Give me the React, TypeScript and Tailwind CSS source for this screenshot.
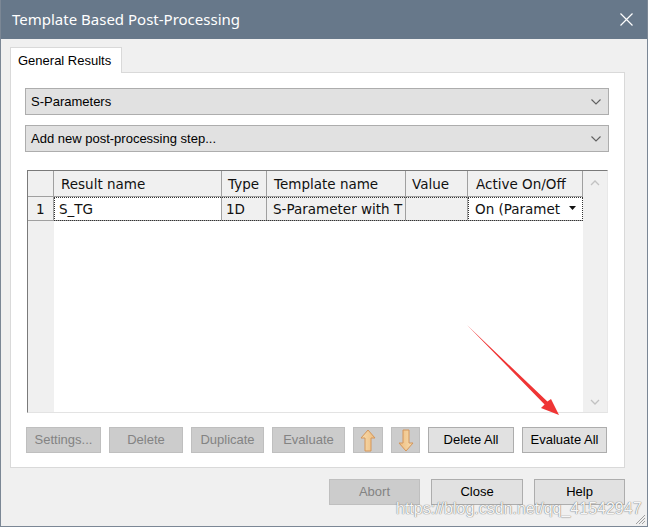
import React from "react";

const btnBase =
  "h-[26px] flex items-center justify-center border text-[13px] font-['Liberation_Sans',Arial,sans-serif]";
const enabled = "bg-[#e1e1e1] border-[#adadad] text-black";
const disabled = "bg-[#cccccc] border-[#bfbfbf] text-[#838383]";

function Chevron() {
  return (
    <svg width="12" height="8" viewBox="0 0 12 8">
      <path d="M1.5 1.5 L6 6 L10.5 1.5" fill="none" stroke="#606060" strokeWidth="1.1" />
    </svg>
  );
}

function Arrow({ down }: { down?: boolean }) {
  return (
    <svg width="16" height="23" viewBox="0 0 16 23" style={{ transform: down ? "rotate(180deg)" : undefined }}>
      <defs>
        <linearGradient id={down ? "gd" : "gu"} x1="0" y1="0" x2="1" y2="0">
          <stop offset="0" stopColor="#f7dcae" />
          <stop offset="1" stopColor="#eebd80" />
        </linearGradient>
      </defs>
      <path
        d="M8 1 L15 9 L11 9 L11 22 L5 22 L5 9 L1 9 Z"
        fill={`url(#${down ? "gd" : "gu"})`}
        stroke="#d4965a"
        strokeWidth="1"
        strokeLinejoin="round"
      />
    </svg>
  );
}

export default function App() {
  const tableFont = "font-['DejaVu_Sans',Verdana,sans-serif] text-[13.5px] text-[#111]";
  return (
    <div className="relative w-[648px] h-[527px] overflow-hidden bg-[#f0f0f0] border-x border-b border-[#7b8795] flex flex-col">
      {/* Title bar */}
      <div className="h-[39px] bg-[#67788a] flex items-center justify-between pl-[11px] pr-[14px] shrink-0">
        <span className="text-white text-[15px] font-['Noto_Sans',sans-serif]">Template Based Post-Processing</span>
        <svg width="13" height="13" viewBox="0 0 13 13">
          <path d="M0.5 0.5 L12.5 12.5 M12.5 0.5 L0.5 12.5" stroke="#ffffff" strokeWidth="1.2" />
        </svg>
      </div>

      {/* Body */}
      <div className="pl-[9px] pt-[8px] flex flex-col">
        <div className="w-[112px] h-[26px] bg-white border border-b-0 border-[#d9d9d9] relative z-10 -mb-px flex items-center pl-[7px] text-[13px] font-['Liberation_Sans',Arial,sans-serif] text-black">
          General Results
        </div>
        <div className="w-[615px] h-[396px] bg-white border border-[#d9d9d9] pl-[14px] pt-[15px] flex flex-col">
          {/* dropdowns */}
          <div className="w-[584px] h-[27px] bg-[#e1e1e1] border border-[#adadad] flex items-center justify-between pl-[5px] pr-[6px] text-[13px] font-['Liberation_Sans',Arial,sans-serif] text-black">
            <span>S-Parameters</span>
            <Chevron />
          </div>
          <div className="mt-[10px] w-[584px] h-[27px] bg-[#e1e1e1] border border-[#adadad] flex items-center justify-between pl-[5px] pr-[6px] text-[13px] font-['Liberation_Sans',Arial,sans-serif] text-black">
            <span>Add new post-processing step...</span>
            <Chevron />
          </div>

          {/* table */}
          <div className="mt-[18px] ml-[2px] w-[581px] h-[243px] border border-t-[#7a7a7a] border-l-[#7a7a7a] border-r-[#e8e8e8] border-b-[#e3e3e3] flex">
            <div className="w-[555px] flex flex-col">
              {/* header */}
              <div className={`h-[26px] flex bg-[#f0f0f0] ${tableFont}`}>
                <div className="w-[26px] border-r border-b border-[#a0a0a0]" />
                <div className="w-[168px] border-r border-b border-[#a0a0a0] flex items-center pl-[7px] pt-px">Result name</div>
                <div className="w-[45px] border-r border-b border-[#a0a0a0] flex items-center pl-[6px] pt-px">Type</div>
                <div className="w-[139px] border-r border-b border-[#a0a0a0] flex items-center pl-[7px] pt-px">Template name</div>
                <div className="w-[62px] border-r border-b border-[#a0a0a0] flex items-center pl-[6px] pt-px">Value</div>
                <div className="w-[115px] border-r border-b border-[#a0a0a0] flex items-center pl-[8px] pt-px">Active On/Off</div>
              </div>
              {/* row */}
              <div className={`h-[24px] flex ${tableFont}`}>
                <div className="w-[26px] bg-[#f0f0f0] border-r border-b border-[#a0a0a0] flex items-center pl-[8px] pt-px">1</div>
                <div className="flex outline outline-1 outline-dotted outline-[#333] -outline-offset-1">
                  <div className="w-[168px] bg-white border-r border-b border-[#a0a0a0] flex items-center pl-[5px] pt-px">S_TG</div>
                  <div className="w-[45px] bg-[#f0f0f0] border-r border-b border-[#a0a0a0] flex items-center pl-[4px] pt-px">1D</div>
                  <div className="w-[139px] bg-[#f0f0f0] border-r border-b border-[#a0a0a0] flex items-center pl-[6px] pt-px overflow-hidden whitespace-nowrap">S-Parameter with T</div>
                  <div className="w-[62px] bg-[#f0f0f0] border-r border-b border-[#a0a0a0]" />
                  <div className="w-[115px] bg-white border-b border-[#a0a0a0] flex items-center pl-[7px] pt-px overflow-hidden whitespace-nowrap relative outline outline-1 outline-dotted outline-[#333] -outline-offset-1">
                    <span>On (Paramet</span>
                    <div className="absolute right-[2px] top-[2px] bottom-[3px] w-[18px] bg-white flex items-center justify-center">
                      <svg width="7" height="4" viewBox="0 0 7 4">
                        <path d="M0 0 L7 0 L3.5 4 Z" fill="#111" />
                      </svg>
                    </div>
                  </div>
                </div>
              </div>
              {/* filler */}
              <div className="flex-1 flex">
                <div className="w-[26px] bg-[#f0f0f0]" />
                <div className="flex-1 bg-white" />
              </div>
            </div>
            {/* scrollbar */}
            <div className="flex-1 bg-[#f0f0f0] flex flex-col items-center justify-between pt-[9px] pb-[7px]">
              <svg width="10" height="6" viewBox="0 0 10 6">
                <path d="M1 5 L5 1 L9 5" fill="none" stroke="#c2c2c2" strokeWidth="1.3" />
              </svg>
              <svg width="10" height="6" viewBox="0 0 10 6">
                <path d="M1 1 L5 5 L9 1" fill="none" stroke="#c2c2c2" strokeWidth="1.3" />
              </svg>
            </div>
          </div>

          {/* buttons row */}
          <div className="mt-[14px] ml-[1px] flex gap-[8px]">
            <div className={`${btnBase} ${disabled} w-[75px]`}>Settings...</div>
            <div className={`${btnBase} ${disabled} w-[74px]`}>Delete</div>
            <div className={`${btnBase} ${disabled} w-[73px]`}>Duplicate</div>
            <div className={`${btnBase} ${disabled} w-[73px]`}>Evaluate</div>
            <div className={`${btnBase} ${disabled} w-[30px]`}>
              <Arrow />
            </div>
            <div className={`${btnBase} ${disabled} w-[29px]`}>
              <Arrow down />
            </div>
            <div className={`${btnBase} ${enabled} w-[86px]`}>Delete All</div>
            <div className={`${btnBase} ${enabled} w-[85px]`}>Evaluate All</div>
          </div>
        </div>

        {/* bottom buttons */}
        <div className="mt-[11px] ml-[319px] flex gap-[11px]">
          <div className={`${btnBase} ${disabled} w-[91px]`}>Abort</div>
          <div className={`${btnBase} ${enabled} w-[92px]`}>Close</div>
          <div className={`${btnBase} ${enabled} w-[91px]`}>Help</div>
        </div>
      </div>

      {/* watermark */}
      <div className="absolute left-[395px] top-[500px] text-[16px] leading-[18px] font-['Liberation_Sans',Arial,sans-serif] text-[#f6f6f6] [text-shadow:0_0_1px_#7a7a7a,0_0_1px_#7a7a7a] pointer-events-none whitespace-nowrap">
        https://blog.csdn.net/qq_41542947
      </div>

      {/* resize grip */}
      <svg className="absolute right-[1px] bottom-[1px]" width="12" height="12" viewBox="0 0 12 12">
        <path d="M11 2 L2 11 M11 5 L5 11 M11 8 L8 11" stroke="#a0a0a0" strokeWidth="1" />
      </svg>

      {/* red arrow annotation */}
      <svg className="absolute left-0 top-0 pointer-events-none" width="648" height="527" viewBox="0 0 648 527">
        <polygon
          points="466,325 546.4,401.6 550,399 558,415 540,408 543.6,404.4"
          fill="#ef3535"
        />
      </svg>
    </div>
  );
}
